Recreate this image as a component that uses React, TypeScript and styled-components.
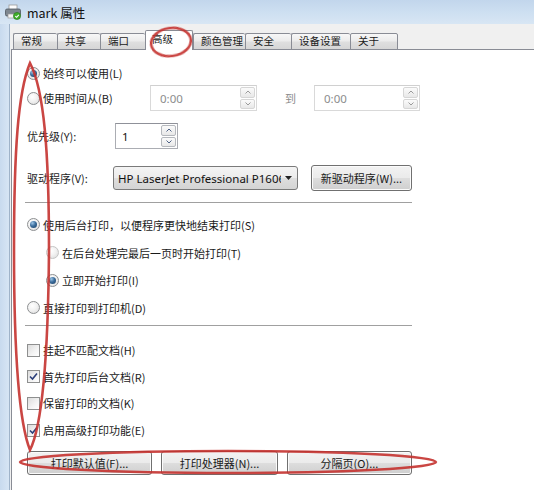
import React from 'react';
import styled, { createGlobalStyle } from 'styled-components';

const GlobalStyle = createGlobalStyle`
  html, body {
    margin: 0;
    padding: 0;
  }
  body {
    width: 534px;
    height: 490px;
    overflow: hidden;
    background: #f0f0f0;
    font-family: "Noto Sans CJK SC", "Noto Sans", sans-serif;
    color: #1e1e1e;
  }
`;

const Window = styled.div`
  position: relative;
  width: 534px;
  height: 490px;
  display: flex;
  flex-direction: column;
  overflow: hidden;
`;

const TitleBar = styled.div`
  height: 24px;
  flex-shrink: 0;
  display: flex;
  align-items: center;
  gap: 5px;
  padding-left: 4px;
  background: linear-gradient(to bottom, #c2d6ec 0%, #cddff1 50%, #d8e6f4 100%);
  font-size: 12.5px;
  color: #111;
`;

const Frame = styled.div`
  flex: 1;
  display: flex;
`;

const FrameEdge = styled.div`
  width: 9px;
  flex-shrink: 0;
  background: linear-gradient(to right, #c8daee, #d7e5f4);
  border-right: 1px solid #9fb3c9;
`;

const Dialog = styled.div`
  flex: 1;
  display: flex;
  flex-direction: column;
  background: #f0f0f0;
  padding: 7px 0 0 1px;
`;

const TabRow = styled.div`
  height: 19px;
  display: flex;
  align-items: flex-end;
  padding-left: 2px;
  position: relative;
  z-index: 1;
  margin-bottom: -1px;
`;

const Tab = styled.div<{ $w: number; $active?: boolean }>`
  width: ${(p) => p.$w}px;
  height: ${(p) => (p.$active ? 20 : 17)}px;
  box-sizing: border-box;
  border: 1px solid #898c95;
  border-bottom: ${(p) => (p.$active ? 'none' : '1px solid #898c95')};
  border-right: ${(p) => (p.$active ? '1px solid #898c95' : 'none')};
  border-radius: 2px 2px 0 0;
  background: ${(p) =>
    p.$active
      ? '#ffffff'
      : 'linear-gradient(to bottom, #f7f7f7 0%, #ececec 45%, #dfdfdf 55%, #d6d6d6 100%)'};
  font-size: 10.5px;
  line-height: 1;
  display: flex;
  align-items: center;
  padding-left: ${(p) => (p.$active ? 6 : 7)}px;
  padding-bottom: ${(p) => (p.$active ? 3 : 0)}px;
  color: #1a1a1a;
  &:last-child {
    border-right: 1px solid #898c95;
  }
`;

const Panel = styled.div`
  flex: 1;
  background: #ffffff;
  border-top: 1px solid #898c95;
  border-left: 1px solid #898c95;
  padding: 11px 0 0 15px;
  display: flex;
  flex-direction: column;
  font-size: 11px;
`;

const Row = styled.div<{ $h: number; $mt?: number; $indent?: number }>`
  height: ${(p) => p.$h}px;
  margin-top: ${(p) => p.$mt ?? 0}px;
  padding-left: ${(p) => p.$indent ?? 0}px;
  display: flex;
  align-items: center;
  flex-shrink: 0;
`;

const Option = styled.div<{ $w?: number }>`
  display: flex;
  align-items: center;
  width: ${(p) => (p.$w ? `${p.$w}px` : 'auto')};
  flex-shrink: 0;
`;

const RadioCircle = styled.span<{ $checked?: boolean; $dim?: boolean }>`
  width: 13px;
  height: 13px;
  box-sizing: border-box;
  border-radius: 50%;
  border: 1px solid ${(p) => (p.$dim ? '#c4c4c4' : '#8d8f91')};
  background: radial-gradient(circle at 40% 35%, #ffffff 0%, #f2f2f2 45%, #d8d8d8 100%);
  display: flex;
  align-items: center;
  justify-content: center;
  flex-shrink: 0;
  &::after {
    content: '';
    display: ${(p) => (p.$checked ? 'block' : 'none')};
    width: 7px;
    height: 7px;
    border-radius: 50%;
    background: radial-gradient(circle at 35% 30%, #9cc4e6 0%, #3b6d9c 45%, #1c3f63 100%);
  }
`;

const CheckBox = styled.span`
  width: 13px;
  height: 13px;
  box-sizing: border-box;
  border: 1px solid #8e8f8f;
  background: linear-gradient(135deg, #dcdcdc 0%, #f4f4f4 60%, #ffffff 100%);
  display: flex;
  align-items: center;
  justify-content: center;
  flex-shrink: 0;
`;

const Label = styled.span`
  margin-left: 3px;
  white-space: nowrap;
  color: #1a1a1a;
`;

const FieldLabel = styled.span<{ $w: number }>`
  width: ${(p) => p.$w}px;
  flex-shrink: 0;
  white-space: nowrap;
`;

const SpinBox = styled.div<{ $w: number; $disabled?: boolean; $ml?: number }>`
  width: ${(p) => p.$w}px;
  height: 26px;
  margin-left: ${(p) => p.$ml ?? 0}px;
  box-sizing: border-box;
  border: 1px solid ${(p) => (p.$disabled ? '#d9d9d9' : '#abadb3')};
  border-top-color: ${(p) => (p.$disabled ? '#d0d0d0' : '#8f9199')};
  background: #ffffff;
  display: flex;
  flex-shrink: 0;
`;

const SpinValue = styled.div<{ $pad: number; $disabled?: boolean }>`
  flex: 1;
  display: flex;
  align-items: center;
  padding-left: ${(p) => p.$pad}px;
  font-family: "Noto Sans", sans-serif;
  font-size: 11.5px;
  color: ${(p) => (p.$disabled ? '#8d8d8d' : '#111')};
`;

const SpinButtons = styled.div`
  width: 15px;
  display: flex;
  flex-direction: column;
  gap: 1px;
  padding: 1px;
`;

const SpinButton = styled.div<{ $disabled?: boolean }>`
  flex: 1;
  box-sizing: border-box;
  border: 1px solid ${(p) => (p.$disabled ? '#d6d6d6' : '#b5b8bd')};
  border-radius: 2px;
  background: linear-gradient(to bottom, #fbfbfb, #e8e8e8);
  display: flex;
  align-items: center;
  justify-content: center;
`;

const ToLabel = styled.span`
  margin-left: 28px;
  width: 16px;
  color: #8a8a8a;
  flex-shrink: 0;
`;

const Combo = styled.div`
  width: 185px;
  height: 24px;
  box-sizing: border-box;
  border: 1px solid #7a7a7a;
  border-radius: 3px;
  background: linear-gradient(to bottom, #f4f4f4 0%, #ececec 48%, #dedede 52%, #d4d4d4 100%);
  display: flex;
  align-items: center;
  padding: 0 5px 0 4px;
  flex-shrink: 0;
`;

const ComboText = styled.span`
  flex: 1;
  overflow: hidden;
  white-space: nowrap;
  font-family: "Noto Sans", sans-serif;
  font-size: 11.5px;
  color: #111;
`;

const PushButton = styled.div<{ $w: number; $h?: number; $ml?: number }>`
  width: ${(p) => p.$w}px;
  height: ${(p) => p.$h ?? 24}px;
  margin-left: ${(p) => p.$ml ?? 0}px;
  box-sizing: border-box;
  border: 1px solid #707070;
  border-radius: 3px;
  background: linear-gradient(to bottom, #f2f2f2 0%, #ebebeb 48%, #dddddd 52%, #cfcfcf 100%);
  box-shadow: inset 0 0 0 1px #fbfbfb;
  display: flex;
  align-items: center;
  justify-content: center;
  white-space: nowrap;
  flex-shrink: 0;
  color: #1a1a1a;
`;

const Separator = styled.div<{ $mt: number }>`
  width: 387px;
  height: 1px;
  margin: ${(p) => p.$mt}px 0 0 -2px;
  background: #a0a0a0;
  border-bottom: 1px solid #ffffff;
  flex-shrink: 0;
`;

const Marks = styled.svg`
  position: absolute;
  left: 0;
  top: 0;
  pointer-events: none;
  z-index: 5;
`;

const PrinterIcon = () => (
  <svg width="18" height="16" viewBox="0 0 18 16">
    <rect x="5" y="1" width="8" height="5" fill="#fdfdfd" stroke="#9a9a9a" strokeWidth="0.8" />
    <rect x="1.5" y="5" width="15" height="7" rx="1.5" fill="#7e8790" stroke="#4e565e" strokeWidth="0.8" />
    <rect x="4" y="10" width="10" height="4" fill="#f4f4f4" stroke="#9a9a9a" strokeWidth="0.7" />
    <circle cx="13" cy="12" r="3.6" fill="#3fae2a" stroke="#26761a" strokeWidth="0.6" />
    <path d="M11.3 12.1 L12.6 13.3 L14.8 10.8" fill="none" stroke="#fff" strokeWidth="1.1" />
  </svg>
);

const Chevron = ({ up, disabled }: { up?: boolean; disabled?: boolean }) => (
  <svg width="6" height="4" viewBox="0 0 6 4">
    <path
      d={up ? 'M0.5 3.5 L3 1 L5.5 3.5' : 'M0.5 0.5 L3 3 L5.5 0.5'}
      fill="none"
      stroke={disabled ? '#9a9a9a' : '#4d6185'}
      strokeWidth="1"
    />
  </svg>
);

const CheckMark = () => (
  <svg width="9" height="9" viewBox="0 0 9 9">
    <path d="M1 4.5 L3.5 7 L8 1.5" fill="none" stroke="#2c3f7a" strokeWidth="1.6" />
  </svg>
);

const Spin = ({ w, value, pad, disabled, ml }: { w: number; value: string; pad: number; disabled?: boolean; ml?: number }) => (
  <SpinBox $w={w} $disabled={disabled} $ml={ml}>
    <SpinValue $pad={pad} $disabled={disabled}>{value}</SpinValue>
    <SpinButtons>
      <SpinButton $disabled={disabled}><Chevron up disabled={disabled} /></SpinButton>
      <SpinButton $disabled={disabled}><Chevron disabled={disabled} /></SpinButton>
    </SpinButtons>
  </SpinBox>
);

const Radio = ({ label, checked, dim, w }: { label: string; checked?: boolean; dim?: boolean; w?: number }) => (
  <Option $w={w}>
    <RadioCircle $checked={checked} $dim={dim} />
    <Label>{label}</Label>
  </Option>
);

const Check = ({ label, checked }: { label: string; checked?: boolean }) => (
  <Option>
    <CheckBox>{checked && <CheckMark />}</CheckBox>
    <Label>{label}</Label>
  </Option>
);

const tabs = [
  { label: '常规', w: 44 },
  { label: '共享', w: 43 },
  { label: '端口', w: 45 },
  { label: '高级', w: 48, active: true },
  { label: '颜色管理', w: 52 },
  { label: '安全', w: 46 },
  { label: '设备设置', w: 59 },
  { label: '关于', w: 48 },
];

const checks = [
  { label: '挂起不匹配文档(H)', checked: false },
  { label: '首先打印后台文档(R)', checked: true },
  { label: '保留打印的文档(K)', checked: false },
  { label: '启用高级打印功能(E)', checked: true },
];

export default function App() {
  return (
    <Window>
      <GlobalStyle />
      <TitleBar>
        <PrinterIcon />
        <span>mark 属性</span>
      </TitleBar>
      <Frame>
        <FrameEdge />
        <Dialog>
          <TabRow>
            {tabs.map((t) => (
              <Tab key={t.label} $w={t.w} $active={t.active}>
                {t.label}
              </Tab>
            ))}
          </TabRow>
          <Panel>
            <Row $h={24}>
              <Radio label="始终可以使用(L)" checked />
            </Row>
            <Row $h={26}>
              <Radio label="使用时间从(B)" w={123} />
              <Spin w={107} value="0:00" pad={9} disabled />
              <ToLabel>到</ToLabel>
              <Spin w={106} value="0:00" pad={9} disabled ml={13} />
            </Row>
            <Row $h={26} $mt={12}>
              <FieldLabel $w={88}>优先级(Y):</FieldLabel>
              <Spin w={63} value="1" pad={6} />
            </Row>
            <Row $h={26} $mt={16}>
              <FieldLabel $w={86}>驱动程序(V):</FieldLabel>
              <Combo>
                <ComboText>HP LaserJet Professional P1606dn</ComboText>
                <svg width="7" height="4" viewBox="0 0 7 4" style={{ marginLeft: 4 }}>
                  <path d="M0 0 L7 0 L3.5 4 Z" fill="#222" />
                </svg>
              </Combo>
              <PushButton $w={101} $h={26} $ml={13}>新驱动程序(W)...</PushButton>
            </Row>
            <Separator $mt={11} />
            <Row $h={27.7} $mt={7}>
              <Radio label="使用后台打印，以便程序更快地结束打印(S)" checked />
            </Row>
            <Row $h={27.7} $indent={19}>
              <Radio label="在后台处理完最后一页时开始打印(T)" dim />
            </Row>
            <Row $h={27.7} $indent={19}>
              <Radio label="立即开始打印(I)" checked />
            </Row>
            <Row $h={27.7}>
              <Radio label="直接打印到打印机(D)" />
            </Row>
            <Separator $mt={3} />
            <Row $h={10} />
            {checks.map((c) => (
              <Row key={c.label} $h={26.7}>
                <Check label={c.label} checked={c.checked} />
              </Row>
            ))}
            <Row $h={24} $mt={7}>
              <PushButton $w={125}>打印默认值(F)...</PushButton>
              <PushButton $w={117} $ml={9}>打印处理器(N)...</PushButton>
              <PushButton $w={125} $ml={9}>分隔页(O)...</PushButton>
            </Row>
          </Panel>
        </Dialog>
      </Frame>
      <Marks width="534" height="490" viewBox="0 0 534 490">
        <g fill="none" stroke="#c4312e" strokeWidth="2.6" strokeLinecap="round" opacity="0.9">
          <ellipse cx="171" cy="42" rx="20" ry="14" transform="rotate(-8 171 42)" />
          <path d="M30 63 C18 92, 14 150, 14 250 C14 350, 18 420, 30 450 C40 430, 48 380, 49 250 C49 150, 44 90, 30 63 Z" />
          <ellipse cx="228" cy="462" rx="208" ry="11" />
        </g>
      </Marks>
    </Window>
  );
}
